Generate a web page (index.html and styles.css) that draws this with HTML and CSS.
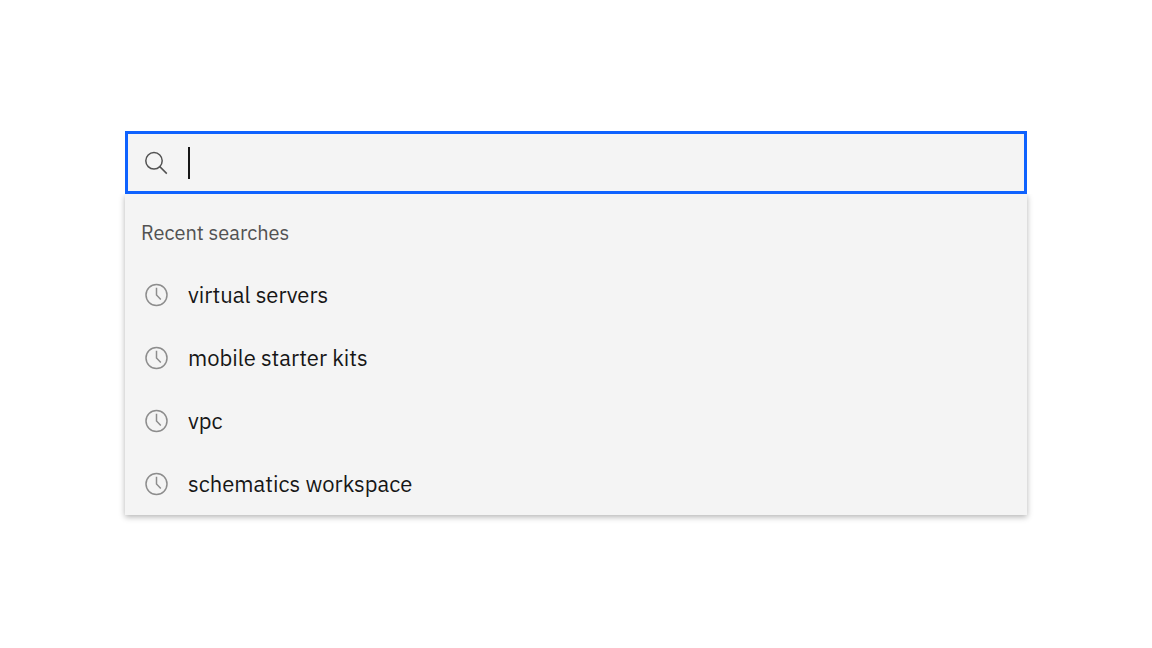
FILE: index.html
```html
<!DOCTYPE html>
<html lang="en">
  <head>
    <meta charset="UTF-8" />
    <meta name="viewport" content="width=device-width, initial-scale=1" />
    <title>Search</title>
    <link rel="stylesheet" href="styles.css">
  </head>

  <body>
    <!-- clock icon shared by the list items -->
    <svg class="sprite" aria-hidden="true">
      <symbol id="clock" viewBox="0 0 24 24">
        <circle cx="12.5" cy="12" r="10.5" />
        <path d="M12.5 4.8V12l4.3 4.4" />
      </symbol>
    </svg>

    <main>
      <form class="search" role="search">
        <label class="icon" for="search" aria-label="Search">
          <svg class="searchIcon" viewBox="0 0 24 24">
            <circle cx="10" cy="9.8" r="8.2" />
            <path d="M15.8 15.6l7 7" />
          </svg>
        </label>
        <span class="cursor"></span>
        <input id="search" type="text" autocomplete="off" />
      </form>

      <section class="menu">
        <h2>Recent searches</h2>
        <ul>
          <li>
            <button type="button"><svg class="clock"><use href="#clock" /></svg>virtual servers</button>
          </li>
          <li>
            <button type="button"><svg class="clock"><use href="#clock" /></svg>mobile starter kits</button>
          </li>
          <li>
            <button type="button"><svg class="clock"><use href="#clock" /></svg>vpc</button>
          </li>
          <li>
            <button type="button"><svg class="clock"><use href="#clock" /></svg>schematics workspace</button>
          </li>
        </ul>
      </section>
    </main>
  </body>
</html>
```
FILE: styles.css
```css
* {
  box-sizing: border-box;
}

body {
  margin: 0;
  background-color: white;
  color: #161616;
  font-family: "IBM Plex Sans", "Noto Sans", sans-serif;
}

main {
  margin: 131px 125px;
}

svg {
  display: block;
  width: 24px;
  height: 24px;
  fill: none;
  stroke-width: 1.5;
}

.sprite {
  display: none;
}

.search {
  display: flex;
  align-items: center;
  height: 63px;
  padding: 0 16px;
  border: 3px solid #0f62fe;
  background-color: #f4f4f4;
}

.searchIcon {
  stroke: #525252;
}

.cursor {
  width: 2px;
  height: 32px;
  margin-left: 20px;
  background-color: #161616;
}

input {
  flex: 1;
  min-width: 0;
  height: 100%;
  padding: 0;
  border: none;
  outline: none;
  background: none;
  font: inherit;
  font-size: 22px;
  caret-color: transparent;
}

.menu {
  padding-top: 24px;
  background-color: #f4f4f4;
  box-shadow: 0 2px 6px rgba(0, 0, 0, 0.3);
  clip-path: inset(0 -12px -12px);
}

h2 {
  margin: 0;
  padding: 0 16px 15px;
  color: #525252;
  font-size: 20px;
  font-weight: 400;
  line-height: 30px;
}

ul {
  margin: 0;
  padding: 0;
  list-style: none;
}

button {
  display: flex;
  align-items: center;
  gap: 20px;
  width: 100%;
  height: 63px;
  padding: 0 19px;
  border: none;
  background: none;
  color: inherit;
  font: inherit;
  font-size: 22px;
  text-align: left;
  cursor: pointer;
}

.clock {
  stroke: #8d8d8d;
}
```
